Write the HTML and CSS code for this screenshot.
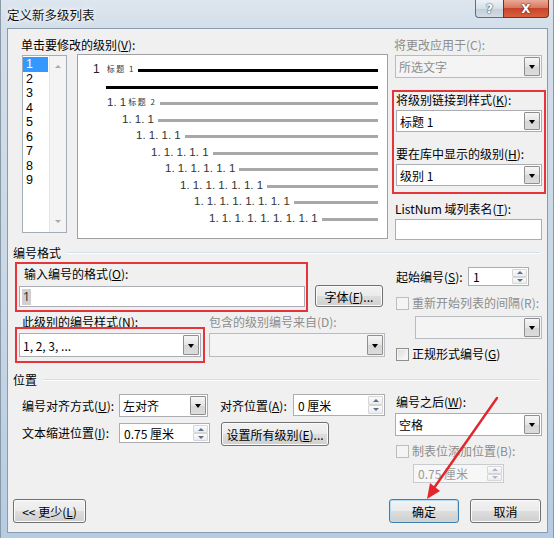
FILE: index.html
```html
<!DOCTYPE html>
<html lang="zh-CN">
<head>
<meta charset="utf-8">
<title>定义新多级列表</title>
<link rel="stylesheet" href="styles.css">
</head>
<body>
<div class="window">
  <div class="titlebar">
    <span class="title">定义新多级列表</span>
    <div class="caption-btns">
      <span class="cap-btn help">?</span>
      <span class="cap-btn close">X</span>
    </div>
  </div>

  <div class="client">
    <!-- top: levels + preview + link options -->
    <div class="top">
      <div class="levels-area">
        <div class="label lbl-top">单击要修改的级别(<u>V</u>):</div>
        <div class="levels-row">
          <div class="listbox">
            <div class="list-items">
              <div class="item sel">1</div>
              <div class="item">2</div>
              <div class="item">3</div>
              <div class="item">4</div>
              <div class="item">5</div>
              <div class="item">6</div>
              <div class="item">7</div>
              <div class="item">8</div>
              <div class="item">9</div>
            </div>
            <div class="vscroll"><span class="sarrow up"></span><span class="sarrow down"></span></div>
          </div>
          <div class="preview">
            <div class="prow r1"><span class="pnum n1">1</span><span class="ptag t1">标题 1</span><span class="pline blk"></span></div>
            <div class="pbar"></div>
            <div class="prow lv2"><span class="pnum">1. 1</span><span class="ptag">标题 2</span><span class="pline"></span></div>
            <div class="prow lv3"><span class="pnum">1. 1. 1</span><span class="pline"></span></div>
            <div class="prow lv4"><span class="pnum">1. 1. 1. 1</span><span class="pline"></span></div>
            <div class="prow lv5"><span class="pnum">1. 1. 1. 1. 1</span><span class="pline"></span></div>
            <div class="prow lv6"><span class="pnum">1. 1. 1. 1. 1. 1</span><span class="pline"></span></div>
            <div class="prow lv7"><span class="pnum">1. 1. 1. 1. 1. 1. 1</span><span class="pline"></span></div>
            <div class="prow lv8"><span class="pnum">1. 1. 1. 1. 1. 1. 1. 1</span><span class="pline"></span></div>
            <div class="prow lv9"><span class="pnum">1. 1. 1. 1. 1. 1. 1. 1. 1</span><span class="pline"></span></div>
          </div>
        </div>
      </div>

      <div class="right-col">
        <div class="label dis lbl-top">将更改应用于(C):</div>
        <div class="combo disabled apply"><span class="val">所选文字</span><span class="dd"></span></div>
        <div class="mark mark-link">
          <div class="label">将级别链接到样式(<u>K</u>):</div>
          <div class="combo c22"><span class="val">标题 1</span><span class="dd"></span></div>
          <div class="label gap-lbl">要在库中显示的级别(<u>H</u>):</div>
          <div class="combo c22"><span class="val">级别 1</span><span class="dd"></span></div>
        </div>
        <div class="label listnum">ListNum 域列表名(<u>T</u>):</div>
        <div class="textbox listnum-box"></div>
      </div>
    </div>

    <!-- 编号格式 -->
    <div class="group-head head-fmt"><span class="head-text">编号格式</span><span class="head-line"></span></div>
    <div class="numfmt">
      <div class="fmt-left">
        <div class="fmt-row1">
          <div class="mark mark-fmt">
            <div class="label pl5">输入编号的格式(<u>O</u>):</div>
            <div class="textbox fmt-input"><span class="selnum">1</span></div>
          </div>
          <div class="btn btn-font">字体(<u>F</u>)...</div>
        </div>
        <div class="fmt-row2">
          <div class="style-col">
            <div class="label lbl12 pl7">此级别的编号样式(N):</div>
            <div class="mark mark-style">
              <div class="combo c24"><span class="val">1, 2, 3, ...</span><span class="dd"></span></div>
            </div>
          </div>
          <div class="from-col">
            <div class="label lbl12 dis">包含的级别编号来自(D):</div>
            <div class="combo c24 disabled from-combo"><span class="val"></span><span class="dd"></span></div>
          </div>
        </div>
      </div>
      <div class="fmt-right">
        <div class="start-row">
          <span class="label">起始编号(<u>S</u>):</span>
          <div class="spin start-spin"><span class="val">1</span><span class="spin-btns"><span class="sb up"></span><span class="sb down"></span></span></div>
        </div>
        <div class="cb-row cb-restart"><span class="cb disabled"></span><span class="cb-text dis">重新开始列表的间隔(R):</span></div>
        <div class="combo disabled restart-combo"><span class="val"></span><span class="dd"></span></div>
        <div class="cb-row cb-legal"><span class="cb"></span><span class="cb-text">正规形式编号(<u>G</u>)</span></div>
      </div>
    </div>

    <!-- 位置 -->
    <div class="group-head head-pos"><span class="head-text">位置</span><span class="head-line"></span></div>
    <div class="position">
      <div class="pos-grid">
        <div class="label">编号对齐方式(<u>U</u>):</div>
        <div class="combo align-combo"><span class="val">左对齐</span><span class="dd"></span></div>
        <div class="label">对齐位置(<u>A</u>):</div>
        <div class="spin at-spin"><span class="val">0 厘米</span><span class="spin-btns"><span class="sb up"></span><span class="sb down"></span></span></div>
        <div class="label indent-lbl">文本缩进位置(<u>I</u>):</div>
        <div class="spin indent-spin"><span class="val">0.75 厘米</span><span class="spin-btns"><span class="sb up"></span><span class="sb down"></span></span></div>
        <div class="btn btn-all">设置所有级别(<u>E</u>)...</div>
      </div>
      <div class="pos-right">
        <div class="label after-lbl">编号之后(<u>W</u>):</div>
        <div class="combo after-combo"><span class="val">空格</span><span class="dd"></span></div>
        <div class="cb-row cb-tab"><span class="cb disabled"></span><span class="cb-text dis">制表位添加位置(B):</span></div>
        <div class="spin disabled tab-spin"><span class="val">0.75 厘米</span><span class="spin-btns"><span class="sb up"></span><span class="sb down"></span></span></div>
      </div>
    </div>

    <!-- buttons -->
    <div class="buttons">
      <div class="btn btn-less">&lt;&lt; 更少(<u>L</u>)</div>
      <div class="btn btn-ok">确定</div>
      <div class="btn btn-cancel">取消</div>
    </div>
  </div>

  <svg class="annot" width="554" height="538" viewBox="0 0 554 538">
    <line x1="497" y1="398" x2="434" y2="488" stroke="#e3262b" stroke-width="2.4" stroke-linecap="round"/>
    <polygon points="427,499 440,491 430,483" fill="#e3262b"/>
  </svg>
</div>
</body>
</html>
```

FILE: styles.css
```css
* { box-sizing: border-box; }
html, body { margin: 0; padding: 0; }
body {
  width: 554px; height: 538px; overflow: hidden;
  background: #c9d7e5;
  font-family: "Noto Sans CJK SC", "Noto Sans", sans-serif;
  font-size: 12px; color: #000;
}
u { text-decoration: underline; text-underline-offset: 1px; }

.window {
  position: relative;
  width: 554px; height: 538px;
  display: flex; flex-direction: column;
  background: linear-gradient(180deg, #dde6ef 0px, #d3dee9 30px, #c8d7e6 300px, #b6cce2 100%);
  box-shadow: inset 1px 0 0 #8a99a8, inset -1px 0 0 #8a99a8;
}

/* title bar */
.titlebar { height: 28px; flex-shrink: 0; display: flex; align-items: flex-start; }
.title {
  margin: 6px 0 0 7px; font-size: 12.5px; line-height: 17px; color: #111;
  text-shadow: 0 0 6px #fff, 0 0 3px #fff;
}
.caption-btns { margin-left: auto; margin-right: 5px; display: flex; }
.cap-btn {
  height: 18px; display: flex; align-items: center; justify-content: center;
  font-family: "DejaVu Sans", sans-serif; font-weight: bold; color: #fff;
  border: 1px solid #5f6f80; border-top: none; font-size: 12px;
}
.help {
  width: 28px; border-right: none; border-radius: 0 0 0 4px;
  background: linear-gradient(#eef2f6, #d6dfe8 50%, #c2cedb 51%, #d3dce6);
  text-shadow: 0 0 1px #34475a, 0 0 2px #34475a;
}
.close {
  width: 46px; border-radius: 0 0 4px 0; border-color: #7a2f1f;
  background: linear-gradient(#eaa997, #d77a63 45%, #c7452a 50%, #d9603f 100%);
  text-shadow: 0 0 2px #5a1a0a, 0 0 1px #5a1a0a;
}

/* client */
.client {
  margin: 0 6px 0 7px; height: 505px;
  border: 1px solid #8a9bad; background: #f0f0f0;
  padding: 9px 5px 9px 5px;
  display: flex; flex-direction: column;
}

.label { font-size: 12px; line-height: 15px; height: 15px; white-space: nowrap; color: #000; }
.label.dis, .dis { color: #8d8d8d; }
.lbl12 { line-height: 12px; height: 12px; }
.pl5 { padding-left: 5px; }
.pl7 { padding-left: 7px; }

/* top */
.top { display: flex; height: 202px; padding-left: 9px; flex-shrink: 0; }
.levels-area { width: 366px; display: flex; flex-direction: column; }
.lbl-top { height: 16px; line-height: 14px; margin-left: -1px; }
.levels-row { display: flex; gap: 10px; }

.listbox {
  width: 45px; height: 178px; margin-top: 1px;
  border: 1px solid #a5acb5; background: #fff; display: flex;
}
.list-items { flex: 1; padding: 1px 1px 0 0; }
.item {
  height: 14.5px; line-height: 14.5px; padding-left: 3px; overflow: hidden;
  font-family: "Liberation Sans", sans-serif; font-size: 12.5px;
}
.item.sel { background: #3399ff; color: #fff; }
.vscroll {
  width: 17px; background: #f4f4f4; border-left: 1px solid #e6e6e6;
  display: flex; flex-direction: column; justify-content: space-between; align-items: center;
  padding: 9px 0 9px 0;
}
.sarrow { width: 0; height: 0; border-left: 3px solid transparent; border-right: 3px solid transparent; }
.sarrow.up { border-bottom: 3px solid #a9a9a9; }
.sarrow.down { border-top: 3px solid #a9a9a9; }

.preview {
  width: 311px; height: 185px;
  border: 1px solid #a0a0a0; background: #fff;
  display: flex; flex-direction: column; padding-right: 9px;
}
.prow { display: flex; align-items: center; height: 16.5px; flex-shrink: 0; }
.prow.r1 { margin-top: 7px; height: 14px; padding-left: 15px; }
.pbar { height: 3px; background: #000; margin: 10px 0 4.75px 28px; flex-shrink: 0; }
.pnum { font-family: "Liberation Sans", sans-serif; font-size: 11.5px; line-height: 14px; color: #333; white-space: pre; }
.n1 { font-size: 12px; color: #222; }
.ptag { font-size: 8px; line-height: 10px; letter-spacing: 1.5px; color: #333; margin-left: 2px; white-space: pre; }
.ptag.t1 { margin-left: 7px; }
.pline { flex: 1; height: 3px; background: #a8a8a8; margin-left: 4px; margin-top: 3px; }
.pline.blk { background: #000; margin-left: 3px; }
.lv2 { padding-left: 29px; }
.lv3 { padding-left: 44px; }
.lv4 { padding-left: 58px; }
.lv5 { padding-left: 73px; }
.lv6 { padding-left: 87px; }
.lv7 { padding-left: 102px; }
.lv8 { padding-left: 116px; }
.lv9 { padding-left: 131px; }

.right-col { width: 147px; margin-left: 7px; display: flex; flex-direction: column; }

/* controls */
.combo {
  display: flex; align-items: stretch; height: 23px;
  border: 1px solid #abadb3; background: #fff; flex-shrink: 0;
}
.combo .val { flex: 1; padding-left: 3px; display: flex; align-items: center; white-space: nowrap; font-size: 12px; }
.combo .dd {
  width: 16px; margin: 1px 1px 1px 0;
  border: 1px solid #8f8f8f; border-radius: 1px;
  background: linear-gradient(#f6f6f6, #e4e4e4 50%, #d6d6d6 51%, #dcdcdc);
  display: flex; align-items: center; justify-content: center;
}
.combo .dd::after {
  content: ""; width: 0; height: 0;
  border-left: 3.5px solid transparent; border-right: 3.5px solid transparent;
  border-top: 4px solid #000; margin-top: 1px;
}
.combo.disabled { background: #f4f4f4; border-color: #b8bcc0; }
.combo.disabled .val { color: #8d8d8d; }
.c22 { height: 22px; }
.c24 { height: 24px; }
.apply { margin-top: 1px; }

.textbox { border: 1px solid #abadb3; background: #fff; flex-shrink: 0; }

.spin { display: flex; border: 1px solid #abadb3; background: #fff; flex-shrink: 0; }
.spin .val { flex: 1; padding-left: 4px; display: flex; align-items: center; white-space: nowrap; font-size: 12px; }
.spin-btns { width: 15px; display: flex; flex-direction: column; margin: 1px 1px 1px 0; }
.sb {
  flex: 1; border: 1px solid #d6d6d6; border-radius: 1px;
  background: linear-gradient(#fbfbfb, #ececec);
  display: flex; align-items: center; justify-content: center;
}
.sb::after { content: ""; width: 0; height: 0; border-left: 3px solid transparent; border-right: 3px solid transparent; }
.sb.up::after { border-bottom: 3px solid #5a6d8e; }
.sb.down::after { border-top: 3px solid #5a6d8e; }
.spin.disabled { background: #f7f7f7; border-color: #c8cbcf; }
.spin.disabled .val { color: #9a9a9a; }
.spin.disabled .sb::after { opacity: 0.45; }

.cb-row { display: flex; align-items: center; height: 14px; flex-shrink: 0; }
.cb {
  width: 13px; height: 13px; margin-left: 1px;
  border: 1px solid #8e8f8f;
  background: linear-gradient(135deg, #dcdcdc, #fbfbfb);
  box-shadow: inset 0 0 0 1px #f4f4f4;
}
.cb.disabled { border-color: #bdbdbd; background: #f4f4f4; box-shadow: none; }
.cb-text { margin-left: 3px; line-height: 14px; white-space: nowrap; }

.btn {
  display: flex; align-items: center; justify-content: center; flex-shrink: 0;
  border: 1px solid #707070; border-radius: 3px;
  background: linear-gradient(#f2f2f2 0%, #ebebeb 48%, #dddddd 52%, #cfcfcf 100%);
  box-shadow: inset 0 0 0 1px #fbfbfb;
  font-size: 12px; white-space: nowrap;
}

/* red annotation frames */
.mark { border: 2px solid #e5343a; flex-shrink: 0; }
.mark-link { margin: 12px -4px 0 -3px; padding: 0 2px 6px 2px; display: flex; flex-direction: column; }
.mark-link .combo { margin-top: 3px; }
.mark-link .gap-lbl { margin-top: 14px; }
.listnum { margin-top: 7px; }
.listnum-box { margin-top: 3px; height: 21px; }

/* group headings */
.group-head { display: flex; align-items: center; height: 16px; flex-shrink: 0; }
.head-text { line-height: 16px; white-space: nowrap; }
.head-line { flex: 1; height: 2px; border-top: 1px solid #d5dfe5; border-bottom: 1px solid #fff; margin: 0 2px 0 6px; }
.head-fmt { margin-top: 5px; }
.head-pos { margin-top: 9px; }

/* number format */
.numfmt { display: flex; height: 101px; margin-top: 1px; padding-left: 2px; flex-shrink: 0; }
.fmt-left { width: 370px; display: flex; flex-direction: column; }
.fmt-row1 { display: flex; height: 50px; }
.mark-fmt { width: 293px; height: 50px; padding: 2px 1px 3px 2px; }
.fmt-input { margin-top: 5px; height: 21px; display: flex; align-items: center; padding-left: 2px; }
.selnum { background: #d0d0d0; color: #333; padding: 0 1px; line-height: 16px; font-family: "Noto Sans", sans-serif; }
.btn-font { width: 68px; height: 22px; margin: 23px 0 0 7px; }
.fmt-row2 { display: flex; margin-top: 4px; }
.style-col { width: 190px; display: flex; flex-direction: column; }
.mark-style { margin-top: -1px; padding: 4px 2px; }
.from-col { width: 176px; margin-left: 4px; display: flex; flex-direction: column; }
.from-combo { margin-top: 5px; }

.fmt-right { width: 147px; margin-left: 10px; display: flex; flex-direction: column; }
.start-row { display: flex; align-items: center; height: 19px; margin-top: 5px; padding-left: 1px; }
.start-spin { width: 61px; height: 19px; margin-left: auto; margin-right: 13px; }
.cb-restart { margin-top: 10px; }
.restart-combo { margin: 6px 0 0 20px; }
.cb-legal { margin-top: 8px; }

/* position */
.position { display: flex; height: 96px; padding-left: 9px; flex-shrink: 0; }
.pos-grid {
  display: grid; grid-template-columns: 97px 101px 73px 92px;
  grid-template-rows: 24px 24px; row-gap: 5px; align-items: center;
  margin-top: 5px; align-self: flex-start;
}
.align-combo { width: 89px; }
.at-spin { width: 92px; height: 22px; }
.indent-lbl { align-self: start; margin-top: 3px; }
.indent-spin { width: 91px; height: 20px; align-self: start; margin-top: 1px; }
.btn-all { grid-column: 3 / span 2; justify-self: start; width: 108px; height: 24px; margin-left: 1px; }

.pos-right { width: 147px; margin-left: 10px; display: flex; flex-direction: column; }
.after-lbl { margin-top: 6px; padding-left: 1px; }
.after-combo { margin-top: 4px; }
.cb-tab { margin-top: 8px; }
.tab-spin { width: 91px; height: 19px; margin: 6px 0 0 18px; }

/* bottom buttons */
.buttons { display: flex; height: 24px; margin-top: 15px; flex-shrink: 0; }
.btn-less { width: 73px; height: 24px; }
.btn-ok {
  width: 70px; height: 24px; margin-left: auto;
  border-color: #3c7fb1;
  box-shadow: inset 0 0 0 1px #b5dcf3;
}
.btn-cancel { width: 71px; height: 24px; margin-left: 11px; margin-right: 1px; }

/* overlay annotation arrow */
.annot { position: absolute; left: 0; top: 0; pointer-events: none; }
```
